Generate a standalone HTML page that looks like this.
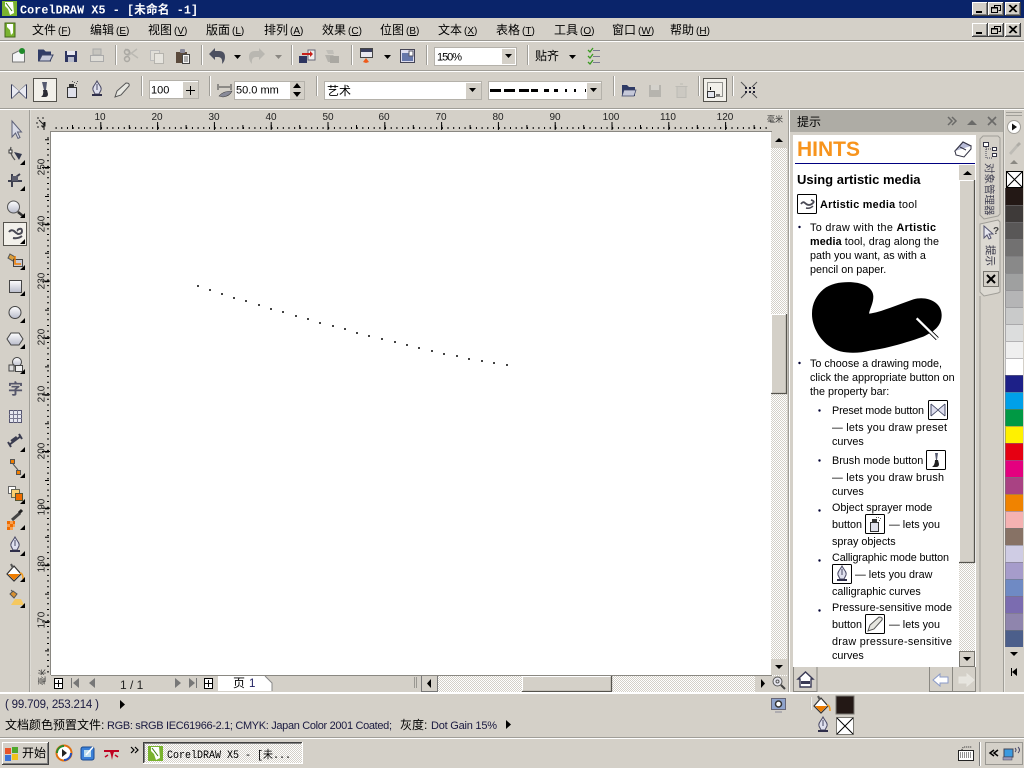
<!DOCTYPE html>
<html><head><meta charset="utf-8"><title>CorelDRAW X5</title>
<style>
html,body{margin:0;padding:0;background:#d4d0c8;width:1024px;height:768px;overflow:hidden}
svg{display:block;position:absolute;left:0;top:0}
text{font-family:"Liberation Sans","Noto Sans CJK SC",sans-serif;font-size:11px;fill:#000}
.m{font-size:12px}.m tspan{font-size:10px}
.h{font-size:10.8px}
.r{font-size:10px;fill:#222}
.b{font-weight:bold}
</style></head><body>
<svg width="1024" height="768" viewBox="0 0 1024 768" xmlns="http://www.w3.org/2000/svg">
<defs>
<pattern id="ht" width="2" height="2" patternUnits="userSpaceOnUse"><rect width="2" height="2" fill="#fff"/><rect width="1" height="1" fill="#d4d0c8"/><rect x="1" y="1" width="1" height="1" fill="#d4d0c8"/></pattern>
<linearGradient id="gs" x1="0" y1="0" x2="0" y2="1"><stop offset="0" stop-color="#fff"/><stop offset="1" stop-color="#b9bccb"/></linearGradient>
<g id="wb"><rect width="16" height="14" fill="#404040"/><rect width="15" height="13" fill="#fff"/><rect x="1" y="1" width="14" height="12" fill="#808080"/><rect x="1" y="1" width="13" height="11" fill="#d4d0c8"/></g>
<g id="wmin"><use href="#wb"/><rect x="4" y="9" width="6" height="2" fill="#000"/></g>
<g id="wmax"><use href="#wb"/><path d="M6.5 3.5h6v5h-2M6.5 3.5v2M3.500 5.500h6v5h-6zM3 6h7M6 3.500h7" fill="none" stroke="#000"/></g>
<g id="wcl"><use href="#wb"/><path d="M4 3l7 7M5 3l7 7M11 3l-7 7M12 3l-7 7" stroke="#000" fill="none"/></g>
<path id="fo" d="M5 0v5h-5z" fill="#000"/>
<path id="dd" d="M0 0h7l-3.500 4z" fill="#000"/>
<g id="nib"><path d="M0-8C-2-4-5-2-4 1L-2 5H2L4 1C5-2 2-4 0-8Z" fill="#dfe0ee" stroke="#4a4a66"/><path d="M0-5V1" stroke="#4a4a66"/><rect x="-5" y="5" width="10" height="2" fill="#2f2f4a"/></g>
<g id="bkt"><path d="M-7 1L0-7L7 1L0 8Z" fill="#fff" stroke="#333" stroke-width="1.200"/><path d="M-6 1H6L0 7Z" fill="#ef7d00"/><path d="M-3-9L-1-5" stroke="#555" stroke-width="2"/><path d="M6 0Q9 0 9 6" stroke="#ef9a20" stroke-width="1.500" fill="none"/></g>
</defs>

<rect width="1024" height="768" fill="#d4d0c8"/>

<!-- title bar -->
<rect width="1024" height="18" fill="#0a246a"/>
<rect x="2" y="1" width="15" height="15" fill="#7ab32e"/>
<path d="M5 2h8l1 11-4 2-2-6-3-3z" fill="#fff"/><path d="M6 3l6 8" stroke="#3a7a10"/>
<text x="20" y="13.500" class="b" textLength="178" style="font-family:'Liberation Mono','Noto Sans CJK SC',monospace;font-size:11.700px;fill:#fff">CorelDRAW X5 - [未命名 -1]</text>
<use href="#wmin" x="972" y="2"/><use href="#wmax" x="988" y="2"/><use href="#wcl" x="1005" y="2"/>

<!-- menu -->
<rect x="5" y="23" width="10" height="14" fill="#7ab32e" stroke="#44661c"/><path d="M7 24h6v9l-2 2-1-5-3-3z" fill="#fff"/>
<text class="m" y="34"><tspan x="32" style="font-size:12px">文件</tspan><tspan dx="2">(</tspan><tspan text-decoration="underline">F</tspan><tspan>)</tspan></text>
<text class="m" y="34"><tspan x="90" style="font-size:12px">编辑</tspan><tspan dx="2">(</tspan><tspan text-decoration="underline">E</tspan><tspan>)</tspan></text>
<text class="m" y="34"><tspan x="148" style="font-size:12px">视图</tspan><tspan dx="2">(</tspan><tspan text-decoration="underline">V</tspan><tspan>)</tspan></text>
<text class="m" y="34"><tspan x="206" style="font-size:12px">版面</tspan><tspan dx="2">(</tspan><tspan text-decoration="underline">L</tspan><tspan>)</tspan></text>
<text class="m" y="34"><tspan x="264" style="font-size:12px">排列</tspan><tspan dx="2">(</tspan><tspan text-decoration="underline">A</tspan><tspan>)</tspan></text>
<text class="m" y="34"><tspan x="322" style="font-size:12px">效果</tspan><tspan dx="2">(</tspan><tspan text-decoration="underline">C</tspan><tspan>)</tspan></text>
<text class="m" y="34"><tspan x="380" style="font-size:12px">位图</tspan><tspan dx="2">(</tspan><tspan text-decoration="underline">B</tspan><tspan>)</tspan></text>
<text class="m" y="34"><tspan x="438" style="font-size:12px">文本</tspan><tspan dx="2">(</tspan><tspan text-decoration="underline">X</tspan><tspan>)</tspan></text>
<text class="m" y="34"><tspan x="496" style="font-size:12px">表格</tspan><tspan dx="2">(</tspan><tspan text-decoration="underline">T</tspan><tspan>)</tspan></text>
<text class="m" y="34"><tspan x="554" style="font-size:12px">工具</tspan><tspan dx="2">(</tspan><tspan text-decoration="underline">O</tspan><tspan>)</tspan></text>
<text class="m" y="34"><tspan x="612" style="font-size:12px">窗口</tspan><tspan dx="2">(</tspan><tspan text-decoration="underline">W</tspan><tspan>)</tspan></text>
<text class="m" y="34"><tspan x="670" style="font-size:12px">帮助</tspan><tspan dx="2">(</tspan><tspan text-decoration="underline">H</tspan><tspan>)</tspan></text>
<use href="#wmin" x="972" y="23"/><use href="#wmax" x="988" y="23"/><use href="#wcl" x="1005" y="23"/>
<rect y="40" width="1024" height="1" fill="#9a9892"/><rect y="41" width="1024" height="1" fill="#fff"/>

<!-- toolbar 1 -->
<rect y="70" width="1024" height="1" fill="#a09e98"/><rect y="71" width="1024" height="1" fill="#fff"/>
<g fill="#a09e98"><rect x="115" y="45" width="1" height="20"/><rect x="201" y="45" width="1" height="20"/><rect x="291" y="45" width="1" height="20"/><rect x="351" y="45" width="1" height="20"/><rect x="426" y="45" width="1" height="20"/><rect x="527" y="45" width="1" height="20"/></g>
<g fill="#fff"><rect x="116" y="45" width="1" height="20"/><rect x="202" y="45" width="1" height="20"/><rect x="292" y="45" width="1" height="20"/><rect x="352" y="45" width="1" height="20"/><rect x="427" y="45" width="1" height="20"/><rect x="528" y="45" width="1" height="20"/></g>
<!-- new -->
<path d="M12.500 54l6-3h6v11h-12z" fill="#f4f4f6" stroke="#777"/><circle cx="22" cy="51" r="3" fill="#1f8a2a"/>
<!-- open -->
<path d="M38.500 50h5l2 2h5v9h-12z" fill="#2f3b66" stroke="#2f3b66"/><path d="M39 61l3-6h11l-3 6z" fill="#c5c8d8" stroke="#3c4466"/>
<!-- save -->
<rect x="65" y="51" width="12" height="11" fill="#2e3560"/><rect x="67" y="51" width="8" height="4" fill="#e8e8f0"/><rect x="68" y="57" width="6" height="5" fill="#b8bccc"/>
<!-- print -->
<rect x="93" y="49" width="8" height="6" fill="#c7c5bf" stroke="#aaa"/><rect x="90.500" y="55.500" width="13" height="6" fill="#dedcd6" stroke="#aaa"/>
<!-- cut -->
<path d="M125 49l13 9M137 49l-12 9" stroke="#bbb9b3" stroke-width="1.500" fill="none"/><circle cx="127" cy="59" r="2.500" fill="none" stroke="#aaa8a2" stroke-width="1.500"/><circle cx="127" cy="52" r="2.500" fill="none" stroke="#aaa8a2" stroke-width="1.500"/>
<!-- copy -->
<rect x="150.500" y="50.500" width="9" height="10" fill="#e0ded8" stroke="#bbb"/><rect x="154.500" y="53.500" width="9" height="10" fill="#e6e4de" stroke="#b5b3ad"/>
<!-- paste -->
<rect x="176" y="52" width="11" height="11" fill="#5b4a3c"/><rect x="180" y="49" width="5" height="4" rx="1" fill="#889"/><rect x="182.500" y="54.500" width="7" height="9" fill="#f4f4f4" stroke="#444"/><path d="M184 57h4M184 59h4M184 61h4" stroke="#666"/>
<!-- undo -->
<path d="M215 48l-6 6 6 6v-3h3q5 0 4 7 3-3 3-7 0-6-6-6h-4z" fill="#4c5060"/>
<use href="#dd" x="234" y="55"/>
<path d="M259 48l6 6-6 6v-3h-3q-5 0-4 7-3-3-3-7 0-6 6-6h4z" fill="#b9b7b1"/>
<use href="#dd" x="275" y="55" opacity=".35"/>
<!-- import -->
<rect x="299" y="56" width="8" height="7" fill="#2e3560"/><rect x="308" y="50" width="7" height="10" fill="#eee" stroke="#667"/><path d="M302 53h8v-2l3 3-3 3v-2h-8z" fill="#c8201a"/>
<path d="M325 55h8l2 2v5h-7z" fill="#b4b2ac"/><rect x="330" y="56" width="9" height="7" fill="#aaa8a2"/><path d="M333 50h-7l2 4h6z" fill="#c0beb8"/>
<!-- publish -->
<rect x="360.500" y="48.500" width="12" height="9" fill="#e8e8ef" stroke="#444"/><rect x="361" y="49" width="11" height="3" fill="#3a3f5e"/><path d="M363 62l3-4 3 4-3 1z" fill="#ef5a1a"/>
<use href="#dd" x="384" y="55"/>
<rect x="400.500" y="49.500" width="14" height="13" fill="#dde" stroke="#445"/><rect x="402" y="53" width="11" height="8" fill="#6677aa"/><rect x="409" y="51" width="4" height="5" fill="#fff" stroke="#556"/>
<!-- zoom combo -->
<rect x="434.500" y="47.500" width="82" height="18" fill="#fff" stroke="#b4b1aa"/>
<rect x="502" y="49" width="13" height="15" fill="#d4d0c8"/>
<use href="#dd" x="505" y="54"/>
<text x="437" y="60.500" textLength="25" style="font-size:11px">150%</text>
<text x="535" y="60" style="font-size:12px">贴齐</text>
<use href="#dd" x="569" y="55"/>
<path d="M593 50.500h7M593 56.500h7M593 62.500h7" stroke="#7a7a92"/><path d="M588 50l2 2 3-4M588 56l2 2 3-4M588 62l2 2 3-4" stroke="#3a9a20" fill="none" stroke-width="1.300"/>

<!-- toolbar 2 -->
<rect y="108" width="1024" height="1" fill="#a09e98"/><rect y="109" width="1024" height="1" fill="#fff"/>
<g fill="#a09e98"><rect x="141" y="76" width="1" height="20"/><rect x="209" y="76" width="1" height="20"/><rect x="316" y="76" width="1" height="20"/><rect x="613" y="76" width="1" height="20"/><rect x="698" y="76" width="1" height="20"/><rect x="732" y="76" width="1" height="20"/></g>
<g fill="#fff"><rect x="142" y="76" width="1" height="20"/><rect x="210" y="76" width="1" height="20"/><rect x="317" y="76" width="1" height="20"/><rect x="614" y="76" width="1" height="20"/><rect x="699" y="76" width="1" height="20"/><rect x="733" y="76" width="1" height="20"/></g>
<path d="M11.500 84.500l15 14M26.500 84.500l-15 14M11.500 84.500v14M26.500 84.500v14" fill="none" stroke="#343a58"/><path d="M12 85l7 6-7 7zM26 85l-7 6 7 7z" fill="#e8e9f1"/>
<rect x="33.500" y="78.500" width="23" height="23" fill="#f2f0ea" stroke="#55534d"/>
<path d="M42 82l2 8h2l1-8" fill="#555a70"/><path d="M43 90h4l1 4q0 3-3 3h-4q3-2 2-7z" fill="#2b2b34"/>
<rect x="67.500" y="87.500" width="9" height="10" fill="#dfe0ea" stroke="#333"/><rect x="69" y="84" width="5" height="3" fill="#333"/><path d="M74 82h1v1h-1zM76 83h1v1h-1zM72 81h1v1h-1zM77 81h1v1h-1zM75 85h1v1h-1z" fill="#555"/>
<use href="#nib" x="97" y="89"/>
<path d="M115 97l2-6 9-8q4 0 3 3l-8 9z" fill="#e6e6e0" stroke="#555"/>
<!-- spinner -->
<rect x="149.500" y="80.500" width="49" height="18" fill="#fff" stroke="#b4b1aa"/><rect x="183" y="82" width="15" height="16" fill="#d4d0c8"/>
<path d="M186 90.500h9M190.500 86v9" stroke="#000"/>
<text x="151" y="93.500">100</text>
<path d="M218 84v6M231 84v6M219 87h11" stroke="#444"/><path d="M219 96q4-5 13-5-2 5-9 6z" fill="#888a99" stroke="#444" stroke-width=".6"/>
<rect x="234.500" y="81.500" width="70" height="18" fill="#fff" stroke="#b4b1aa"/><rect x="290" y="82" width="14" height="17" fill="#d4d0c8"/>
<path d="M297 83l4 5h-8zM297 97l4-5h-8z" fill="#000"/>
<text x="236" y="93.500">50.0 mm</text>
<rect x="324.500" y="81.500" width="157" height="18" fill="#fff" stroke="#b4b1aa"/><rect x="466" y="83" width="15" height="16" fill="#d4d0c8"/>
<use href="#dd" x="469" y="88"/>
<text x="327" y="95" style="font-size:12px">艺术</text>
<rect x="488.500" y="81.500" width="113" height="18" fill="#fff" stroke="#b4b1aa"/><rect x="587" y="83" width="14" height="16" fill="#d4d0c8"/>
<use href="#dd" x="590" y="88"/>
<path d="M490 90.500h11M504 90.500h11M519 90.500h10M531 90.500h7M544 90.500h5M554 90.500h4M565 90.500h2M574 90.500h2M585 90.500h1" stroke="#000" stroke-width="3"/>
<path d="M622 85h5l2 2h6v9h-13z" fill="#2f3b66"/><path d="M622 96l2-6h12l-2 6z" fill="#c5c8d8" stroke="#3c4466" stroke-width=".7"/>
<rect x="649" y="85" width="12" height="12" fill="#b6b4ae"/><rect x="651" y="85" width="8" height="5" fill="#d4d2cc"/>
<path d="M675.500 86.500h12M677 86.500v11h9v-11M680 84h3" stroke="#bdbbb5" fill="#ccc9c2"/>
<rect x="703.500" y="78.500" width="23" height="23" fill="#f2f0ea" stroke="#55534d"/>
<rect x="707.500" y="82.500" width="15" height="14" fill="none" stroke="#333" stroke-dasharray="1 1"/><rect x="707.500" y="91.500" width="7" height="6" fill="#e4e6ee" stroke="#333"/><path d="M710.500 90v-3M716 95h4" stroke="#000"/>
<path d="M741 82l5 5M757 82l-5 5M741 98l5-5M757 98l-5-5" stroke="#555"/><path d="M745 87h2v2h-2zM749 87h2v2h-2zM753 87h2v2h-2zM745 91h2v2h-2zM749 91h2v2h-2zM753 91h2v2h-2z" fill="#223"/>

<!-- left toolbox separator -->
<rect x="29" y="110" width="1" height="582" fill="#a09e98"/>
<rect x="30" y="110" width="1" height="582" fill="#dedcd6"/>

<!-- canvas -->
<rect x="51" y="131" width="721" height="544" fill="#fff"/>
<rect x="50" y="131" width="722" height="1" fill="#8a8882"/>
<rect x="50" y="131" width="1" height="545" fill="#8a8882"/>

<!-- top ruler -->
<g stroke="#000" fill="none">
<line x1="55.600" y1="128" x2="771" y2="128" stroke-width="2" stroke-dasharray="1 4.680"/>
<line x1="72" y1="127" x2="771" y2="127" stroke-width="4" stroke-dasharray="1 27.400" stroke-dashoffset="0"/>
<line x1="43.500" y1="126" x2="771" y2="126" stroke-width="8" stroke-dasharray="1 55.800"/>
</g>
<g class="r" text-anchor="middle">
<text class="r" x="100" y="120" text-anchor="middle">10</text><text class="r" x="157" y="120" text-anchor="middle">20</text><text class="r" x="214" y="120" text-anchor="middle">30</text><text class="r" x="271" y="120" text-anchor="middle">40</text><text class="r" x="328" y="120" text-anchor="middle">50</text><text class="r" x="384" y="120" text-anchor="middle">60</text><text class="r" x="441" y="120" text-anchor="middle">70</text><text class="r" x="498" y="120" text-anchor="middle">80</text><text class="r" x="555" y="120" text-anchor="middle">90</text><text class="r" x="611" y="120" text-anchor="middle">100</text><text class="r" x="668" y="120" text-anchor="middle">110</text><text class="r" x="725" y="120" text-anchor="middle">120</text>
</g>
<text x="767" y="122" style="font-size:8px;fill:#333">毫米</text>
<path d="M37 118h2M42 118h2M37 122v2M37 127h2M42 127h2M39 120l6 6M45 122v4h-4" stroke="#222" fill="none"/>
<!-- left ruler -->
<g stroke="#000" fill="none">
<line x1="48" y1="137.500" x2="48" y2="675" stroke-width="2" stroke-dasharray="1 4.680"/>
<line x1="47" y1="139.200" x2="47" y2="675" stroke-width="4" stroke-dasharray="1 27.400"/>
<line x1="46" y1="167" x2="46" y2="675" stroke-width="8" stroke-dasharray="1 55.800"/>
</g>
<g>
<text class="r" transform="translate(44.500,167) rotate(-90)" text-anchor="middle">250</text>
<text class="r" transform="translate(44.500,224) rotate(-90)" text-anchor="middle">240</text>
<text class="r" transform="translate(44.500,281) rotate(-90)" text-anchor="middle">230</text>
<text class="r" transform="translate(44.500,337) rotate(-90)" text-anchor="middle">220</text>
<text class="r" transform="translate(44.500,394) rotate(-90)" text-anchor="middle">210</text>
<text class="r" transform="translate(44.500,451) rotate(-90)" text-anchor="middle">200</text>
<text class="r" transform="translate(44.500,507) rotate(-90)" text-anchor="middle">190</text>
<text class="r" transform="translate(44.500,564) rotate(-90)" text-anchor="middle">180</text>
<text class="r" transform="translate(44.500,620) rotate(-90)" text-anchor="middle">170</text>
<text transform="translate(45,677) rotate(-90)" text-anchor="middle" style="font-size:8px;fill:#333">毫米</text>
</g>

<!-- dots -->
<path fill="#444" d="M197 285h2v2h-2zM209 289h2v2h-2zM221 293h2v2h-2zM233 297h2v2h-2zM245 300h2v2h-2zM258 304h2v2h-2zM270 308h2v2h-2zM282 311h2v2h-2zM295 315h2v2h-2zM307 318h2v2h-2zM319 322h2v2h-2zM332 325h2v2h-2zM344 328h2v2h-2zM356 332h2v2h-2zM368 335h2v2h-2zM381 338h2v2h-2zM394 341h2v2h-2zM406 344h2v2h-2zM418 347h2v2h-2zM431 350h2v2h-2zM443 353h2v2h-2zM456 355h2v2h-2zM468 358h2v2h-2zM481 360h2v2h-2zM493 362h2v2h-2zM506 364h2v2h-2z"/>

<!-- vertical scrollbar canvas -->
<rect x="771" y="132" width="16" height="544" fill="url(#ht)"/>
<rect x="771" y="132" width="16" height="16" fill="#d4d0c8"/><path d="M775 143l4-4 4 4z" fill="#000" transform="translate(0,-1)"/>
<rect x="771" y="314" width="16" height="79" fill="#d4d0c8"/>
<path d="M771.500 393V314.500H786" stroke="#fff" fill="none"/><path d="M786.500 314V393.500H771" stroke="#55534d" fill="none" stroke-width="1.300"/>
<rect x="771" y="659" width="16" height="16" fill="#d4d0c8"/><path d="M775 665h8l-4 4z" fill="#000"/>

<!-- page nav -->
<rect x="30" y="675" width="21" height="1" fill="#d4d0c8"/>
<rect x="51" y="675" width="370" height="17" fill="#d4d0c8"/>
<rect x="51" y="675" width="721" height="1" fill="#8a8882"/>
<g>
<rect x="54.500" y="678.500" width="8" height="10" fill="#fff" stroke="#000"/><path d="M58.500 680v7M55 683.500h7" stroke="#000"/>
<path d="M71.500 678v10" stroke="#777"/><path d="M79 678v10l-6-5z" fill="#777"/>
<path d="M95 678v10l-6-5z" fill="#777"/>
<text x="120" y="689" style="font-size:12px;fill:#222">1 / 1</text>
<path d="M175 678v10l6-5z" fill="#777"/>
<path d="M189 678v10l6-5z" fill="#777"/><path d="M196.500 678v10" stroke="#777"/>
<rect x="204.500" y="678.500" width="8" height="10" fill="#fff" stroke="#000"/><path d="M208.500 680v7M205 683.500h7" stroke="#000"/>
<path d="M218 676h47l7 7v8h-54z" fill="#fff"/><path d="M265 676l7 7v8" fill="none" stroke="#888"/>
<text x="233" y="687" style="font-size:12px">页</text><text x="249" y="687" style="font-size:11.500px;fill:#202060">1</text>
<path d="M414.500 677v11M416.500 677v11" stroke="#9a9892"/>
</g>
<!-- h scroll -->
<rect x="421" y="676" width="350" height="16" fill="url(#ht)"/>
<rect x="421" y="676" width="16" height="16" fill="#d4d0c8"/><path d="M421.500 676v15.500h16V676" fill="none" stroke="#777"/><path d="M431 679v9l-4-4.500z" fill="#000"/>
<rect x="522" y="676" width="90" height="15" fill="#d4d0c8"/>
<path d="M522.500 691V676.500H611" stroke="#fff" fill="none"/><path d="M611.500 676V691.500H522" stroke="#55534d" fill="none" stroke-width="1.300"/>
<rect x="755" y="676" width="16" height="16" fill="#d4d0c8"/><path d="M761 679v9l4-4.500z" fill="#000"/>
<rect x="771" y="676" width="17" height="16" fill="#d4d0c8"/>
<circle cx="777.500" cy="681.500" r="4.500" fill="#e8e8f0" stroke="#555"/><circle cx="777.500" cy="681.500" r="1.500" fill="none" stroke="#555"/><path d="M781 685l4 4" stroke="#444" stroke-width="2"/>

<!-- toolbox icons -->
<rect x="3.500" y="222.500" width="23" height="23" fill="#f2f0ea" stroke="#55534d"/>
<path d="M12 121V137L15.500 133 18 138.500 20 137.500 17.500 132H21.500Z" fill="#d9dbe7" stroke="#5c6078"/>
<path d="M11 147q-2 6 4 13" fill="none" stroke="#555" stroke-width="1.300"/><rect x="9" y="150" width="3" height="3" fill="#fff" stroke="#333"/><path d="M14 152l8 2-3 6z" fill="#33384c"/><use href="#fo" x="20" y="160"/>
<path d="M8 181h14M12 174v13M12 180l8-6" stroke="#3d3f4f" stroke-width="2" fill="none"/><rect x="12" y="176" width="6" height="5" fill="#5a5c6c"/><use href="#fo" x="20" y="186"/>
<circle cx="13.500" cy="207" r="6" fill="url(#gs)" stroke="#555"/><path d="M18 212l5 4" stroke="#333" stroke-width="2.500"/><use href="#fo" x="20" y="213"/>
<path d="M9 232q2-3 5-1 2 2 4 3 4 0 4-3t-3-2q-2 1-1 2" fill="none" stroke="#4a4a55" stroke-width="2"/><path d="M13 238q5 1 9-2" fill="none" stroke="#4a4a55" stroke-width="2"/><use href="#fo" x="20" y="239"/>
<path d="M10 254l5 3-2 4-5-3z" fill="#d8a040" stroke="#555"/><rect x="13.500" y="259.500" width="9" height="7" fill="#c9cbd6" stroke="#444"/><path d="M15 256v8h6" fill="none" stroke="#ef7d00" stroke-width="1.500"/><use href="#fo" x="20" y="265"/>
<rect x="9.500" y="280.500" width="12" height="12" fill="url(#gs)" stroke="#444"/><use href="#fo" x="20" y="291"/>
<circle cx="15" cy="312.500" r="6" fill="url(#gs)" stroke="#444"/><use href="#fo" x="20" y="318"/>
<path d="M11 333h8l4 6-4 6h-8l-4-6z" fill="url(#gs)" stroke="#444"/><use href="#fo" x="20" y="344"/>
<circle cx="17" cy="362" r="4.500" fill="url(#gs)" stroke="#444"/><path d="M9 365l5 0 0 6h-5z" fill="#ddd" stroke="#444"/><rect x="15.500" y="365.500" width="7" height="6" fill="#eee" stroke="#444"/><use href="#fo" x="20" y="369"/>
<text x="8" y="394" class="b" style="font-size:15px;fill:#55566a">字</text>
<rect x="9.500" y="410.500" width="12" height="12" fill="#e6e7f0" stroke="#555570"/><path d="M9 414.500h13M9 418.500h13M13.500 410v13M17.500 410v13" stroke="#7a7a92"/>
<path d="M9 445l12-9M8 442l3 5M19 434l3 5" stroke="#3a3c50" stroke-width="2" fill="none"/><rect x="11" y="438" width="7" height="3" fill="#3a3c50" transform="rotate(-36 14 440)"/><use href="#fo" x="20" y="447"/>
<rect x="10.500" y="459.500" width="4" height="4" fill="#ef7d00" stroke="#555"/><rect x="16.500" y="470.500" width="4" height="4" fill="#ef7d00" stroke="#555"/><path d="M13 464l5 6" stroke="#555"/><use href="#fo" x="20" y="473"/>
<rect x="8.500" y="486.500" width="7" height="7" fill="#fff" stroke="#666"/><rect x="11.500" y="489.500" width="8" height="8" fill="#fbd070" stroke="#665"/><rect x="15.500" y="493.500" width="7" height="7" fill="#ef6c00" stroke="#553"/><use href="#fo" x="20" y="499"/>
<path d="M12 520l8-7" stroke="#444" stroke-width="3"/><path d="M19 513l3-3" stroke="#222" stroke-width="3"/><path d="M7 521h3v3H7zM10 524h3v3h-3zM7 527h3v3H7zM13 521h2v3h-2z" fill="#ef6c00"/><path d="M10 521h3v3h-3zM7 524h3v3H7zM13 524h2v3h-2zM10 527h3v3h-3z" fill="#f8a050"/><use href="#fo" x="20" y="525"/>
<use href="#nib" x="15" y="545"/><use href="#fo" x="20" y="551"/>
<use href="#bkt" x="14" y="573"/><use href="#fo" x="20" y="577"/>
<path d="M10 594l3-3 4 3-3 4z" fill="#d89030" stroke="#555"/><path d="M11 590l2 2" stroke="#555"/><path d="M15 599h6l3 6H11z" fill="#f5c860"/><use href="#fo" x="20" y="603"/>

<!-- docker header -->
<rect x="790" y="110" width="213" height="22" fill="#aeaca5"/>
<text x="797" y="126" style="font-size:12px">提示</text>
<path d="M948 117l4 4-4 4M952 117l4 4-4 4" stroke="#6a6a68" stroke-width="1.500" fill="none"/>
<path d="M967 125l5-5 5 5z" fill="#6a6a68"/>
<path d="M988 117l8 8M996 117l-8 8" stroke="#6a6a68" stroke-width="1.600"/>
<rect x="788" y="110" width="1" height="582" fill="#a09e98"/>
<rect x="789" y="110" width="1" height="582" fill="#fff"/>
<rect x="1003" y="110" width="1" height="582" fill="#a09e98"/>
<rect x="1004" y="110" width="1" height="582" fill="#e8e6e0"/>

<!-- hints panel -->
<rect x="793" y="135" width="183" height="532" fill="#fff"/>
<text x="797" y="156" class="b" style="font-size:21px;fill:#f7941d">HINTS</text>
<path d="M955 151l8-9 8 4-7 9z" fill="#b8bcd8" stroke="#334" stroke-width="1.200"/><path d="M955 151l1 4 8 2 7-8v-3" fill="#fff" stroke="#334"/><path d="M960 147l6 3" stroke="#334"/>
<rect x="795" y="163" width="180" height="1" fill="#000080"/>

<text x="797" y="184" class="b" style="font-size:13px">Using artistic media</text>
<rect x="797.500" y="194.500" width="19" height="19" rx="1" fill="#fff" stroke="#000"/>
<path d="M801 204q2-3 4-1t4 2 4-2-2-3" fill="none" stroke="#4a4a55" stroke-width="1.800"/><path d="M806 208q4 1 7-2" fill="none" stroke="#4a4a55" stroke-width="1.500"/>
<text class="h" x="820" y="208" textLength="97"><tspan font-weight="bold">Artistic media</tspan> tool</text>

<circle cx="799.500" cy="227" r="1.200" fill="#003"/>
<text class="h" x="810" y="231" textLength="126">To draw with the <tspan font-weight="bold">Artistic</tspan></text>
<text class="h" x="810" y="245" textLength="129"><tspan font-weight="bold">media</tspan> tool, drag along the</text>
<text class="h" x="810" y="259">path you want, as with a</text>
<text class="h" x="810" y="273">pencil on paper.</text>
<g transform="translate(790,130) scale(.33333)">
<path d="M100 478C125 458 160 455 190 457C225 460 250 475 250 500C250 520 240 535 237 551C270 548 320 525 370 508C410 497 455 515 455 555C455 590 430 605 400 620C350 638 290 655 240 662C200 672 150 672 120 650C90 630 65 590 66 550C66 520 80 495 100 478Z" fill="#000"/>
<path d="M380 565L442 626" stroke="#000" stroke-width="12"/><path d="M380 565L442 626" stroke="#fff" stroke-width="7"/>
</g>
<circle cx="799.500" cy="363" r="1.200" fill="#003"/>
<text class="h" x="810" y="367">To choose a drawing mode,</text>
<text class="h" x="810" y="381">click the appropriate button on</text>
<text class="h" x="810" y="395">the property bar:</text>

<circle cx="819.500" cy="410.500" r="1.200" fill="#003"/>
<text class="h" x="832" y="414" textLength="92">Preset mode button</text>
<rect x="928.500" y="400.500" width="19" height="19" rx="1" fill="#fff" stroke="#000"/>
<path d="M931 404l14 12M945 404l-14 12M931 404v12M945 404v12" fill="none" stroke="#444a66"/><path d="M931.500 405l6 5-6 5zM944.500 405l-6 5 6 5z" fill="#dde"/>
<text class="h" x="832" y="431" textLength="115">— lets you draw preset</text>
<text class="h" x="832" y="445">curves</text>

<circle cx="819.500" cy="460.500" r="1.200" fill="#003"/>
<text class="h" x="832" y="464">Brush mode button</text>
<rect x="926.500" y="450.500" width="19" height="19" rx="1" fill="#fff" stroke="#000"/>
<path d="M935 453l1 7h1l1-7" fill="#555a70"/><path d="M935 460h3l1 4q0 3-3 3h-4q3-2 3-7z" fill="#222"/>
<text class="h" x="832" y="481" textLength="112">— lets you draw brush</text>
<text class="h" x="832" y="495">curves</text>

<circle cx="819.500" cy="510.500" r="1.200" fill="#003"/>
<text class="h" x="832" y="511">Object sprayer mode</text>
<text class="h" x="832" y="528">button</text>
<rect x="865.500" y="514.500" width="19" height="19" rx="1" fill="#fff" stroke="#000"/>
<rect x="870.500" y="522.500" width="8" height="9" fill="#dfe0ea" stroke="#333"/><rect x="872" y="519" width="5" height="3" fill="#333"/><path d="M878 517h1v1h-1zM880 518h1v1h-1zM876 517h1v1h-1zM879 520h1v1h-1z" fill="#555"/>
<text class="h" x="889" y="528">— lets you</text>
<text class="h" x="832" y="545">spray objects</text>

<circle cx="819.500" cy="560.500" r="1.200" fill="#003"/>
<text class="h" x="832" y="561" textLength="117">Calligraphic mode button</text>
<rect x="832.500" y="564.500" width="19" height="19" rx="1" fill="#fff" stroke="#000"/>
<use href="#nib" x="842" y="574"/>
<text class="h" x="855" y="578">— lets you draw</text>
<text class="h" x="832" y="595">calligraphic curves</text>

<circle cx="819.500" cy="610.500" r="1.200" fill="#003"/>
<text class="h" x="832" y="611" textLength="120">Pressure-sensitive mode</text>
<text class="h" x="832" y="628">button</text>
<rect x="865.500" y="614.500" width="19" height="19" rx="1" fill="#fff" stroke="#000"/>
<path d="M868 631l2-6 9-8q4 0 3 3l-8 9z" fill="#e6e6e0" stroke="#555"/>
<text class="h" x="889" y="628">— lets you</text>
<text class="h" x="832" y="645" textLength="120">draw pressure-sensitive</text>
<text class="h" x="832" y="659">curves</text>

<!-- hints scrollbar -->
<rect x="959" y="165" width="16" height="501" fill="url(#ht)"/>
<rect x="959" y="165" width="16" height="15" fill="#d4d0c8"/><path d="M963 175l4.500-4 4.500 4z" fill="#000"/>
<rect x="959" y="180" width="16" height="382" fill="#d4d0c8"/>
<path d="M959.500 562V180.500H974" stroke="#fff" fill="none"/><path d="M974.500 180V562.500H959" stroke="#55534d" fill="none" stroke-width="1.300"/>
<rect x="959" y="651" width="16" height="16" fill="#d4d0c8"/><path d="M959.500 651.500H974.500V666.500H959.500Z" fill="none" stroke="#77756f"/><path d="M963 657h8l-4 4z" fill="#000"/>

<!-- hints bottom -->
<rect x="793" y="667" width="183" height="25" fill="#d4d0c8"/>
<path d="M793.500 667v24.500h23.500V667" fill="none" stroke="#8a8882"/>
<path d="M798 679l7.500-7 7.500 7h-2v8h-11v-8z" fill="#fff" stroke="#3a3a55" stroke-width="1.400"/><rect x="801" y="681" width="9" height="3" fill="#3a3a55"/>
<path d="M929.500 667v24.500h23M952.500 667v24.500h23V667" fill="none" stroke="#8a8882"/>
<path d="M933 680l7-6v3h8v6h-8v3z" fill="#fff" stroke="#8a9ac8"/>
<path d="M974 680l-7-6v3h-8v6h8v3z" fill="#e6e4de" stroke="#e8e6e0"/>

<!-- vertical tabs -->
<path d="M980 139l3-3h15l2 2v76l-2 2-14 3-4-4z" fill="#d4d0c8" stroke="#a09e98"/>
<rect x="983.500" y="142.500" width="5" height="4" fill="#fff" stroke="#334"/><rect x="992.500" y="147.500" width="4" height="3" fill="#fff" stroke="#334"/><rect x="992.500" y="153.500" width="4" height="3" fill="#fff" stroke="#334"/><path d="M986 147v11h6M986 149h6" stroke="#445" stroke-dasharray="1 1" fill="none"/>
<text transform="translate(986,163) rotate(90)" style="font-size:10.500px;fill:#445">对象管理器</text>
<path d="M980 224l18-4 2 2v70l-2 1-14 3-4-4z" fill="#dcd9d2" stroke="#a09e98"/>
<path d="M984 226v12l3-3 2 4 2-1-2-4h4z" fill="#e6e7f0" stroke="#555570"/>
<text x="993" y="234" style="font-size:10px;fill:#444" class="b">?</text>
<text transform="translate(987,245) rotate(90)" style="font-size:10.500px;fill:#334">提示</text>
<rect x="983.500" y="271.500" width="15" height="15" fill="#d4d0c8" stroke="#77756f"/><path d="M987 275l8 8M995 275l-8 8" stroke="#000" stroke-width="2"/>
<path d="M980 296V692" stroke="#a09e98" fill="none"/>

<!-- palette -->
<path d="M1006 112.500h16M1006 115.500h16" stroke="#a09e98"/>
<circle cx="1014" cy="127" r="6.500" fill="#fff" stroke="#a09e98"/><path d="M1012 123.500v7l5-3.500z" fill="#111"/>
<path d="M1009 153l7-8 2 2-7 8z" fill="#bdbbb5"/><path d="M1016 145l3-3 2 2-3 3z" fill="#aeaca6"/>
<path d="M1010 164l4-4 4 4z" fill="#8a8882"/>
<rect x="1006" y="171" width="17" height="17" fill="#000"/><rect x="1007" y="172" width="15" height="15" fill="#fff"/>
<path d="M1007 172l15 15M1022 172l-15 15" stroke="#000"/>
<g>
<rect x="1005" y="188" width="18" height="17" fill="#231815"/><rect x="1005" y="205" width="18" height="17" fill="#3e3a39"/><rect x="1005" y="222" width="18" height="17" fill="#595757"/><rect x="1005" y="239" width="18" height="17" fill="#727171"/><rect x="1005" y="256" width="18" height="17" fill="#898989"/><rect x="1005" y="273" width="18" height="17" fill="#9fa0a0"/><rect x="1005" y="290" width="18" height="17" fill="#b5b5b6"/><rect x="1005" y="307" width="18" height="17" fill="#c9caca"/><rect x="1005" y="324" width="18" height="17" fill="#dcdddd"/><rect x="1005" y="341" width="18" height="17" fill="#efefef"/><rect x="1005" y="358" width="18" height="17" fill="#ffffff"/><rect x="1005" y="375" width="18" height="17" fill="#1d2088"/><rect x="1005" y="392" width="18" height="17" fill="#00a0e9"/><rect x="1005" y="409" width="18" height="17" fill="#009944"/><rect x="1005" y="426" width="18" height="17" fill="#fff100"/><rect x="1005" y="443" width="18" height="17" fill="#e60012"/><rect x="1005" y="460" width="18" height="17" fill="#e4007f"/><rect x="1005" y="477" width="18" height="17" fill="#a94283"/><rect x="1005" y="494" width="18" height="17" fill="#f08300"/><rect x="1005" y="511" width="18" height="17" fill="#f5b2b2"/><rect x="1005" y="528" width="18" height="17" fill="#877265"/><rect x="1005" y="545" width="18" height="17" fill="#cfcce4"/><rect x="1005" y="562" width="18" height="17" fill="#a69ccb"/><rect x="1005" y="579" width="18" height="17" fill="#6f8ac4"/><rect x="1005" y="596" width="18" height="17" fill="#7b6cb0"/><rect x="1005" y="613" width="18" height="17" fill="#8f85ad"/><rect x="1005" y="630" width="18" height="17" fill="#4c5f8b"/>
<path d="M1005 205.500h18M1005 222.500h18M1005 239.500h18M1005 256.500h18M1005 273.500h18M1005 290.500h18M1005 307.500h18M1005 324.500h18M1005 341.500h18M1005 358.500h18M1005 375.500h18M1005 392.500h18M1005 409.500h18M1005 426.500h18M1005 443.500h18M1005 460.500h18M1005 477.500h18M1005 494.500h18M1005 511.500h18M1005 528.500h18M1005 545.500h18M1005 562.500h18M1005 579.500h18M1005 596.500h18M1005 613.500h18M1005 630.500h18M1005.500 188v459" stroke="#77757a" stroke-opacity=".5"/>
</g>
<path d="M1010 652h8l-4 4z" fill="#000"/>
<path d="M1011.500 668v8" stroke="#000"/><path d="M1017 668v8l-5-4z" fill="#000"/>

<!-- status bar -->
<rect y="692" width="1024" height="2" fill="#fff"/>
<text x="5" y="708" textLength="94" style="font-size:11.500px;fill:#1a1a40">( 99.709, 253.214 )</text>
<path d="M120 700v9l5-4.500z" fill="#000"/>
<text x="5" y="729" style="font-size:12px">文档颜色预置文件:</text>
<text x="107" y="729" textLength="285" style="font-size:11px;fill:#1a1a40">RGB: sRGB IEC61966-2.1; CMYK: Japan Color 2001 Coated;</text>
<text x="400" y="729" style="font-size:12px">灰度:</text>
<text x="431" y="729" textLength="66" style="font-size:11px;fill:#1a1a40">Dot Gain 15%</text>
<path d="M506 720v9l5-4.500z" fill="#000"/>
<rect x="771.500" y="698.500" width="14" height="11" fill="#8fa3cc" stroke="#667"/><circle cx="778.500" cy="704" r="3" fill="#fff" stroke="#333" stroke-width="1.500"/><path d="M775 712h7" stroke="#889"/>
<path d="M811.500 697v13" stroke="#fff"/><path d="M811 697v13" stroke="#a09e98" stroke-opacity=".4"/>
<use href="#bkt" x="821" y="705"/>
<rect x="836" y="696" width="18" height="18" fill="#231815" stroke="#7a7872"/>
<use href="#nib" x="823" y="725"/>
<rect x="836.500" y="717.500" width="17" height="17" fill="#fff" stroke="#7a7872"/><path d="M837 718l16 16M853 718l-16 16" stroke="#000"/>

<!-- taskbar -->
<rect y="737" width="1024" height="1" fill="#a09e98"/><rect y="738" width="1024" height="1" fill="#fff"/>
<rect x="2" y="742" width="47" height="23" fill="#404040"/><rect x="2" y="742" width="46" height="22" fill="#fff"/><rect x="3" y="743" width="45" height="21" fill="#808080"/><rect x="3" y="743" width="44" height="20" fill="#d4d0c8"/>
<rect x="5" y="748" width="6" height="6" fill="#e8542a"/><rect x="12" y="747" width="6" height="6" fill="#4fa82c"/><rect x="5" y="755" width="6" height="6" fill="#3a73d8"/><rect x="12" y="754" width="6" height="6" fill="#f2c11b"/>
<text x="22" y="757" style="font-size:12px">开始</text>
<circle cx="64" cy="753" r="7.500" fill="#fff" stroke="#e07010" stroke-width="2"/><path d="M57 753a7 7 0 0 1 7-7" stroke="#2a8a2a" stroke-width="2" fill="none"/><path d="M64 760a7 7 0 0 0 7-7" stroke="#2050c0" stroke-width="2" fill="none"/><path d="M62 749v8l5-4z" fill="#222"/>
<rect x="81" y="747" width="13" height="13" rx="2" fill="#3a80d8" stroke="#1a4a90"/><path d="M84 750h7v7h-7z" fill="#bde"/><path d="M86 755l7-8" stroke="#fff" stroke-width="1.500"/>
<path d="M104 750h15v2h-5l-1 3-1 5-1-5-1-3h-6z" fill="#c00020"/><path d="M108 755l-3 2M115 755l3 2" stroke="#c00020" stroke-width="1.500"/>
<path d="M131 747l3 3-3 3M135 747l3 3-3 3" stroke="#000" stroke-width="1.200" fill="none"/>
<rect x="143" y="742" width="159" height="21" fill="url(#ht)"/>
<path d="M143.500 763V742.500H302" fill="none" stroke="#404040"/><path d="M144.500 762V743.500H301" fill="none" stroke="#808080"/><path d="M143 763.500H302.500V742" fill="none" stroke="#fff"/>
<rect x="148" y="746" width="15" height="15" fill="#7ab32e"/><path d="M151 747h8l1 11-4 2-2-6-3-3z" fill="#fff"/><path d="M152 748l6 8" stroke="#3a7a10"/>
<text x="167" y="758" textLength="124" lengthAdjust="spacingAndGlyphs" style="font-family:'Liberation Mono','Noto Sans CJK SC',monospace;font-size:11px">CorelDRAW X5 - [未...</text>
<!-- tray -->
<rect x="958.500" y="750.500" width="15" height="10" fill="#fff" stroke="#222"/><path d="M960 753h12M960 755h12M960 757h12" stroke="#222" stroke-dasharray="1 1"/><path d="M962 750q0-2 2-3h8" stroke="#222" fill="none" stroke-dasharray="1 1"/>
<rect x="979" y="742" width="1" height="24" fill="#808080"/><rect x="980" y="742" width="1" height="24" fill="#fff"/>
<rect x="985.500" y="742.500" width="37" height="22" fill="none" stroke="#9a9892"/>
<path d="M994 750l-4 3 4 3M998 750l-4 3 4 3" stroke="#000" stroke-width="1.500" fill="none"/>
<rect x="1004" y="749" width="9" height="8" fill="#3a9ae0" stroke="#445"/><rect x="1003" y="757" width="9" height="3" fill="#99b" stroke="#445" stroke-width=".5"/>
<path d="M1015 748q2 2 0 4M1018 747q3 3 0 6" stroke="#446" fill="none"/>
</svg>
</body></html>
